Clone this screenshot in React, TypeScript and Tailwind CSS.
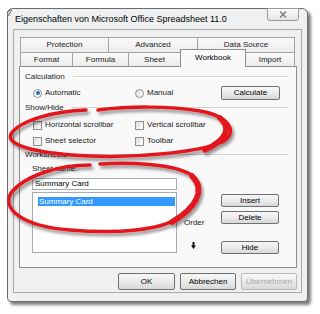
import React from "react";

const Btn = ({ label, w, h = "h-[13px]", disabled = false, cls = "" }: { label: string; w: string; h?: string; disabled?: boolean; cls?: string }) => (
  <div
    className={`${w} ${h} ${cls} flex shrink-0 items-center justify-center rounded-[2px] border bg-gradient-to-b from-[#f7f7f7] via-[#ebebeb] to-[#d8d8d8] ${
      disabled ? "border-[#b8b8b8] text-[#a5a5a5]" : "border-[#707070] text-black"
    }`}
  >
    {label}
  </div>
);

const Group = ({ label, cls }: { label: string; cls: string }) => (
  <div className={`flex h-[10px] items-center pl-[5px] pr-[8px] ${cls}`}>
    <span>{label}</span>
    <span className="ml-[8px] h-[2px] flex-1 border-t border-b border-t-[#d2d2d2] border-b-white" />
  </div>
);

const Check = ({ label, w }: { label: string; w: string }) => (
  <div className={`flex items-center ${w}`}>
    <span className="h-[9px] w-[9px] shrink-0 border border-[#8e8f8f] bg-gradient-to-br from-[#dedede] to-white" />
    <span className="ml-[3px]">{label}</span>
  </div>
);

const Tab = ({ label, w, last = false }: { label: string; w: string; last?: boolean }) => (
  <div
    className={`${w} flex h-full items-center justify-center border-t border-l border-[#a3a3a3] bg-gradient-to-b from-[#fafafa] to-[#ececec] ${
      last ? "border-r" : ""
    }`}
  >
    {label}
  </div>
);

export default function App() {
  return (
    <div className="relative h-[314px] w-[320px] overflow-hidden bg-white font-['Liberation_Sans',Arial,sans-serif] text-[8px] leading-none text-[#1a1a1a]">
      <div className="ml-[7px] mt-[8px] flex h-[294px] w-[301px] flex-col rounded-t-[6px] rounded-b-[4px] border border-[#6d6d6d] bg-[#eef0f2] shadow-[3px_3px_3px_rgba(0,0,0,0.5)]">
        {/* title bar */}
        <div className="flex h-[20px] shrink-0">
          <div className="pl-[7px] pt-[6px] text-[9px] text-black">Eigenschaften von Microsoft Office Spreadsheet 11.0</div>
          <div className="-mt-px ml-auto mr-[8px] flex h-[13px] w-[32px] items-center justify-center rounded-b-[3px] border border-[#9a9a9a] bg-gradient-to-b from-[#fbfbfb] to-[#e6e6e6]">
            <svg width="8" height="7" viewBox="0 0 8 7">
              <path d="M1 0.5 L7 6.5 M7 0.5 L1 6.5" stroke="#7b7b7b" strokeWidth="1.4" fill="none" />
            </svg>
          </div>
        </div>

        {/* client area */}
        <div className="mx-[5px] mb-[8px] flex flex-1 flex-col border border-[#a9a9a9] bg-[#f0f0f0] pl-[5px] pr-[4px] pt-[7px]">
          {/* tab rows */}
          <div className="ml-[1px] flex h-[15px]">
            <Tab label="Protection" w="w-[88px]" />
            <Tab label="Advanced" w="w-[89px]" />
            <Tab label="Data Source" w="w-[98px]" last />
          </div>
          <div className="ml-[1px] flex h-[14px] items-end">
            <Tab label="Format" w="w-[52px]" />
            <Tab label="Formula" w="w-[56px]" />
            <Tab label="Sheet" w="w-[52px]" />
            <div className="relative z-10 -mb-px flex h-[18px] w-[66px] items-start justify-center border-t border-l border-r border-[#8e8f8f] bg-[#f9f9f9] pt-[4px] text-black">
              Workbook
            </div>
            <div className="flex h-full w-[49px] items-center justify-center border-t border-r border-[#a3a3a3] bg-gradient-to-b from-[#fafafa] to-[#ececec]">
              Import
            </div>
          </div>

          {/* panel */}
          <div className="flex h-[202px] flex-col border border-[#8e8f8f] bg-[#f9f9f9]">
            <Group label="Calculation" cls="mt-[5px]" />
            <div className="mt-[4px] flex h-[14px] items-center pl-[13px] pr-[16px]">
              <div className="flex w-[102px] items-center">
                <span className="flex h-[9px] w-[9px] items-center justify-center rounded-full border border-[#8e8f8f] bg-white">
                  <span className="h-[4px] w-[4px] rounded-full bg-[#1f6fc5]" />
                </span>
                <span className="ml-[3px]">Automatic</span>
              </div>
              <div className="flex items-center">
                <span className="h-[9px] w-[9px] rounded-full border border-[#8e8f8f] bg-gradient-to-br from-[#dedede] to-white" />
                <span className="ml-[3px]">Manual</span>
              </div>
              <Btn label="Calculate" w="w-[59px]" h="h-[14px]" cls="ml-auto" />
            </div>

            <Group label="Show/Hide" cls="mt-[3px]" />
            <div className="mt-[7px] flex h-[10px] items-center pl-[13px]">
              <Check label="Horizontal scrollbar" w="w-[102px]" />
              <Check label="Vertical scrollbar" w="" />
            </div>
            <div className="mt-[6px] flex h-[10px] items-center pl-[13px]">
              <Check label="Sheet selector" w="w-[102px]" />
              <Check label="Toolbar" w="" />
            </div>

            <Group label="Worksheets" cls="mt-[4px]" />
            <div className="mt-[4px] flex h-[10px] items-center pl-[12px]">Sheet name:</div>
            <div className="ml-[12px] mt-[4px] flex h-[12px] w-[145px] items-center border border-[#a5acb5] bg-white pl-[2px] text-black">
              Summary Card
            </div>
            <div className="ml-[12px] mt-[2px] flex">
              <div className="h-[61px] w-[145px] border border-[#a5acb5] bg-white pl-[5px] pr-[1px] pt-[4px]">
                <div className="flex h-[9px] items-center bg-[#3399ff] pl-[1px] text-white">Summary Card</div>
              </div>
              <div className="ml-[7px] flex w-[37px] flex-col">
                <div className="mt-[26px] flex h-[10px] items-center">Order</div>
                <div className="ml-[7px] mt-[12px] flex h-[10px] items-center">
                  <svg width="5" height="7" viewBox="0 0 5 7">
                    <path d="M1.5 0 H3.5 V3.5 H5 L2.5 7 L0 3.5 H1.5 Z" fill="#111" />
                  </svg>
                </div>
              </div>
              <div className="flex flex-col">
                <Btn label="Insert" w="w-[58px]" cls="mt-[2px]" />
                <Btn label="Delete" w="w-[58px]" cls="mt-[4px]" />
                <Btn label="Hide" w="w-[58px]" cls="mt-[17px]" />
              </div>
            </div>
          </div>

          {/* dialog buttons */}
          <div className="mt-[5px] flex justify-end gap-[5px]">
            <Btn label="OK" w="w-[57px]" h="h-[17px]" />
            <Btn label="Abbrechen" w="w-[56px]" h="h-[17px]" />
            <Btn label="Übernehmen" w="w-[56px]" h="h-[17px]" disabled />
          </div>
        </div>
      </div>

      {/* hand-drawn red marks over the screenshot */}
      <svg className="pointer-events-none absolute inset-0" width="320" height="314" viewBox="0 0 320 314">
        <defs>
          <filter id="sh" x="-10%" y="-10%" width="130%" height="140%">
            <feDropShadow dx="2" dy="3" stdDeviation="1.6" floodColor="#000" floodOpacity="0.4" />
          </filter>
        </defs>
        <path d="M7 13 C9 9 12 8 11 11 C10 14 8 14 9 16" stroke="#555" strokeWidth="1" fill="none" />
        <g filter="url(#sh)" fill="none" stroke="#e2181c" strokeLinecap="round">
          <path d="M86 110 C55 111 20 120 11 134 C5 146 40 154 90 156 C140 158 200 152 222 142 C240 132 228 116 200 111 C170 106 130 106 98 110" strokeWidth="3.5" />
          <path d="M205 150 C226 140 232 128 220 118" strokeWidth="5.5" />
          <path d="M90 165 C60 165 25 175 11 193 C2 208 20 226 70 230 C120 234 160 230 178 218 C198 204 208 186 190 174 C172 164 130 162 100 164" strokeWidth="3.5" />
          <path d="M172 222 C196 208 206 190 192 176" strokeWidth="5.5" />
        </g>
      </svg>
    </div>
  );
}
